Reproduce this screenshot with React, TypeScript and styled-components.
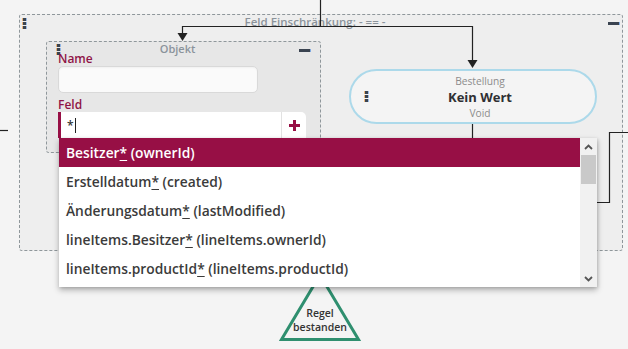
import React from "react";
import styled, { createGlobalStyle } from "styled-components";

const Global = createGlobalStyle`
  html, body { margin: 0; padding: 0; background: #f4f4f4; }
  body { font-family: "Open Sans", "Liberation Sans", sans-serif; }
  * { box-sizing: border-box; }
`;

const MAROON = "#970f45";

const Canvas = styled.div`
  position: relative;
  width: 628px;
  height: 349px;
  overflow: hidden;
  background: #f4f4f4;
`;

const Wires = styled.svg`
  position: absolute;
  left: 0;
  top: 0;
  pointer-events: none;
`;

const GroupNode = styled.div<{ $x: number; $y: number; $w: number; $h: number; $bg: string }>`
  position: absolute;
  left: ${(p) => p.$x}px;
  top: ${(p) => p.$y}px;
  width: ${(p) => p.$w}px;
  height: ${(p) => p.$h}px;
  border: 1px dashed #8f979b;
  border-radius: 3px;
  background: ${(p) => p.$bg};
`;

const NodeHeader = styled.div<{ $pad: number; $h: number }>`
  display: grid;
  grid-template-columns: 8px 1fr 20px;
  align-items: start;
  padding: 1px ${(p) => p.$pad}px 0 ${(p) => p.$pad}px;
  height: ${(p) => p.$h}px;
`;

const Title = styled.div<{ $size: number }>`
  text-align: center;
  font-size: ${(p) => p.$size}px;
  font-weight: 600;
  color: #8b939b;
  line-height: 12px;
  white-space: nowrap;
`;

const HandleDots = styled.div`
  display: flex;
  flex-direction: column;
  gap: 1px;
  width: 3px;
  & > span {
    display: block;
    width: 3px;
    height: 3px;
    background: #3a4350;
    box-shadow: -1px 0 0 rgba(230, 140, 40, 0.6), 1px 0 0 rgba(60, 130, 220, 0.5);
  }
`;

const Handle = () => (
  <HandleDots>
    <span />
    <span />
    <span />
  </HandleDots>
);

const Minus = styled.div`
  justify-self: end;
  width: 11px;
  height: 3px;
  margin-top: 6px;
  background: #3a4350;
  box-shadow: 1px 0 0 rgba(60, 130, 220, 0.6);
`;

const ObjBody = styled.div`
  display: flex;
  flex-direction: column;
  padding: 0 0 0 11px;
`;

const Label = styled.div`
  font-size: 12px;
  font-weight: 600;
  color: #8f1446;
  line-height: 13px;
`;

const TextInput = styled.div`
  width: 200px;
  height: 27px;
  margin-top: 1px;
  margin-bottom: 5px;
  border: 1px solid #d9d9d9;
  border-radius: 5px;
  background: #fafafa;
  box-shadow: inset 0 1px 2px rgba(0, 0, 0, 0.04);
`;

const FieldRow = styled.div`
  display: flex;
  width: 248px;
  height: 26px;
  margin-top: 1px;
  background: #fff;
  border-left: 3px solid ${MAROON};
  border-radius: 0 5px 0 0;
`;

const FieldText = styled.div`
  flex: 1;
  display: flex;
  align-items: center;
  padding-left: 6px;
  font-size: 12px;
  color: #333;
  font-weight: 600;
  & > i {
    display: inline-block;
    width: 1px;
    height: 15px;
    background: #222;
    margin-left: 1px;
  }
`;

const PlusBtn = styled.div`
  width: 25px;
  display: flex;
  align-items: center;
  justify-content: center;
  border-left: 1px solid #e2e2e2;
  border-radius: 0 5px 0 0;
`;

const Pill = styled.div`
  position: absolute;
  left: 349px;
  top: 69px;
  width: 248px;
  height: 55px;
  border: 2px solid #acd9ea;
  border-radius: 28px;
  background: #f4f4f4;
  display: grid;
  grid-template-columns: 30px 1fr 30px;
  align-items: center;
  padding-left: 14px;
`;

const PillText = styled.div`
  display: flex;
  flex-direction: column;
  align-items: center;
  margin-top: 1px;
`;

const Small = styled.div`
  font-size: 10.2px;
  color: #8c8c8c;
  line-height: 14px;
  font-weight: 500;
`;

const Big = styled.div`
  font-size: 13px;
  color: #2f3033;
  font-weight: 700;
  line-height: 18px;
`;

const TriangleNode = styled.div`
  position: absolute;
  left: 278px;
  top: 272px;
  width: 84px;
  height: 72px;
`;

const TriangleLabel = styled.div`
  position: absolute;
  left: 0;
  right: 0;
  top: 34px;
  text-align: center;
  font-size: 10.5px;
  line-height: 14px;
  font-weight: 600;
  color: #333;
`;

const Dropdown = styled.div`
  position: absolute;
  left: 59px;
  top: 138px;
  width: 538px;
  height: 149px;
  background: #fff;
  display: flex;
  box-shadow: 0 3px 6px rgba(0, 0, 0, 0.28), 1px 1px 3px rgba(0, 0, 0, 0.12);
`;

const List = styled.div`
  flex: 1;
  display: flex;
  flex-direction: column;
`;

const Item = styled.div<{ $active?: boolean }>`
  height: 29px;
  display: flex;
  align-items: center;
  padding-left: 7px;
  font-size: 13.8px;
  font-weight: 600;
  white-space: nowrap;
  color: ${(p) => (p.$active ? "#fff" : "#3b3b3b")};
  background: ${(p) => (p.$active ? MAROON : "transparent")};
  & u {
    text-decoration: underline;
    text-underline-offset: 2px;
  }
`;

const Scrollbar = styled.div`
  width: 17px;
  background: #f1f1f1;
  display: flex;
  flex-direction: column;
  align-items: center;
`;

const ScrollArrow = styled.div`
  height: 17px;
  display: flex;
  align-items: center;
  justify-content: center;
`;

const Thumb = styled.div`
  width: 15px;
  height: 29px;
  background: #c9c9c9;
`;

const Spacer = styled.div`
  flex: 1;
`;

const items = [
  ["Besitzer", "(ownerId)"],
  ["Erstelldatum", "(created)"],
  ["Änderungsdatum", "(lastModified)"],
  ["lineItems.Besitzer", "(lineItems.ownerId)"],
  ["lineItems.productId", "(lineItems.productId)"],
];

export default function App() {
  return (
    <Canvas>
      <Global />
      <GroupNode $x={19} $y={14} $w={604} $h={237} $bg="#eeeeee">
        <NodeHeader $pad={3} $h={14}>
          <div style={{ marginTop: 2 }}>
            <Handle />
          </div>
          <Title $size={11.5}>Feld Einschränkung: - == -</Title>
          <Minus />
        </NodeHeader>
      </GroupNode>

      <Wires width={628} height={349}>
        <g stroke="#222" strokeWidth={1.2} fill="none">
          <polyline points="320.5,0 320.5,26.5" />
          <polyline points="182.5,34 182.5,26.5 472.5,26.5 472.5,62" />
          <polyline points="472.5,124 472.5,138" />
          <polyline points="628,132.5 609.5,132.5 609.5,202.5 597,202.5" />
          <polyline points="0,130.5 8,130.5" />
        </g>
        <g fill="#222">
          <polygon points="177.5,33 187.5,33 182.5,41" />
          <polygon points="467.5,60 477.5,60 472.5,68" />
        </g>
      </Wires>

      <GroupNode $x={46} $y={41} $w={275} $h={112} $bg="#e7e7e7">
        <NodeHeader $pad={10} $h={10}>
          <div style={{ marginTop: 1 }}>
            <Handle />
          </div>
          <Title $size={11}>Objekt</Title>
          <Minus />
        </NodeHeader>
        <ObjBody>
          <Label>Name</Label>
          <TextInput />
          <Label>Feld</Label>
          <FieldRow>
            <FieldText>
              *<i />
            </FieldText>
            <PlusBtn>
              <svg width="11" height="11" viewBox="0 0 11 11">
                <rect x="4" y="0" width="3" height="11" fill={MAROON} />
                <rect x="0" y="4" width="11" height="3" fill={MAROON} />
              </svg>
            </PlusBtn>
          </FieldRow>
        </ObjBody>
      </GroupNode>

      <Pill>
        <Handle />
        <PillText>
          <Small>Bestellung</Small>
          <Big>Kein Wert</Big>
          <Small>Void</Small>
        </PillText>
        <span />
      </Pill>

      <TriangleNode>
        <svg width="84" height="72" viewBox="0 0 84 72">
          <polygon
            points="42,3 80.5,67.5 3.5,67.5"
            fill="none"
            stroke="#2f8f6f"
            strokeWidth={3}
            strokeLinejoin="miter"
          />
        </svg>
        <TriangleLabel>
          Regel
          <br />
          bestanden
        </TriangleLabel>
      </TriangleNode>

      <Dropdown>
        <List>
          {items.map(([name, id], i) => (
            <Item key={name} $active={i === 0}>
              {name}
              <u>*</u>&nbsp;{id}
            </Item>
          ))}
        </List>
        <Scrollbar>
          <ScrollArrow>
            <svg width="9" height="6" viewBox="0 0 9 6">
              <polyline points="1,5 4.5,1.5 8,5" fill="none" stroke="#555" strokeWidth={1.8} />
            </svg>
          </ScrollArrow>
          <Thumb />
          <Spacer />
          <ScrollArrow>
            <svg width="9" height="6" viewBox="0 0 9 6">
              <polyline points="1,1 4.5,4.5 8,1" fill="none" stroke="#555" strokeWidth={1.8} />
            </svg>
          </ScrollArrow>
        </Scrollbar>
      </Dropdown>
    </Canvas>
  );
}
